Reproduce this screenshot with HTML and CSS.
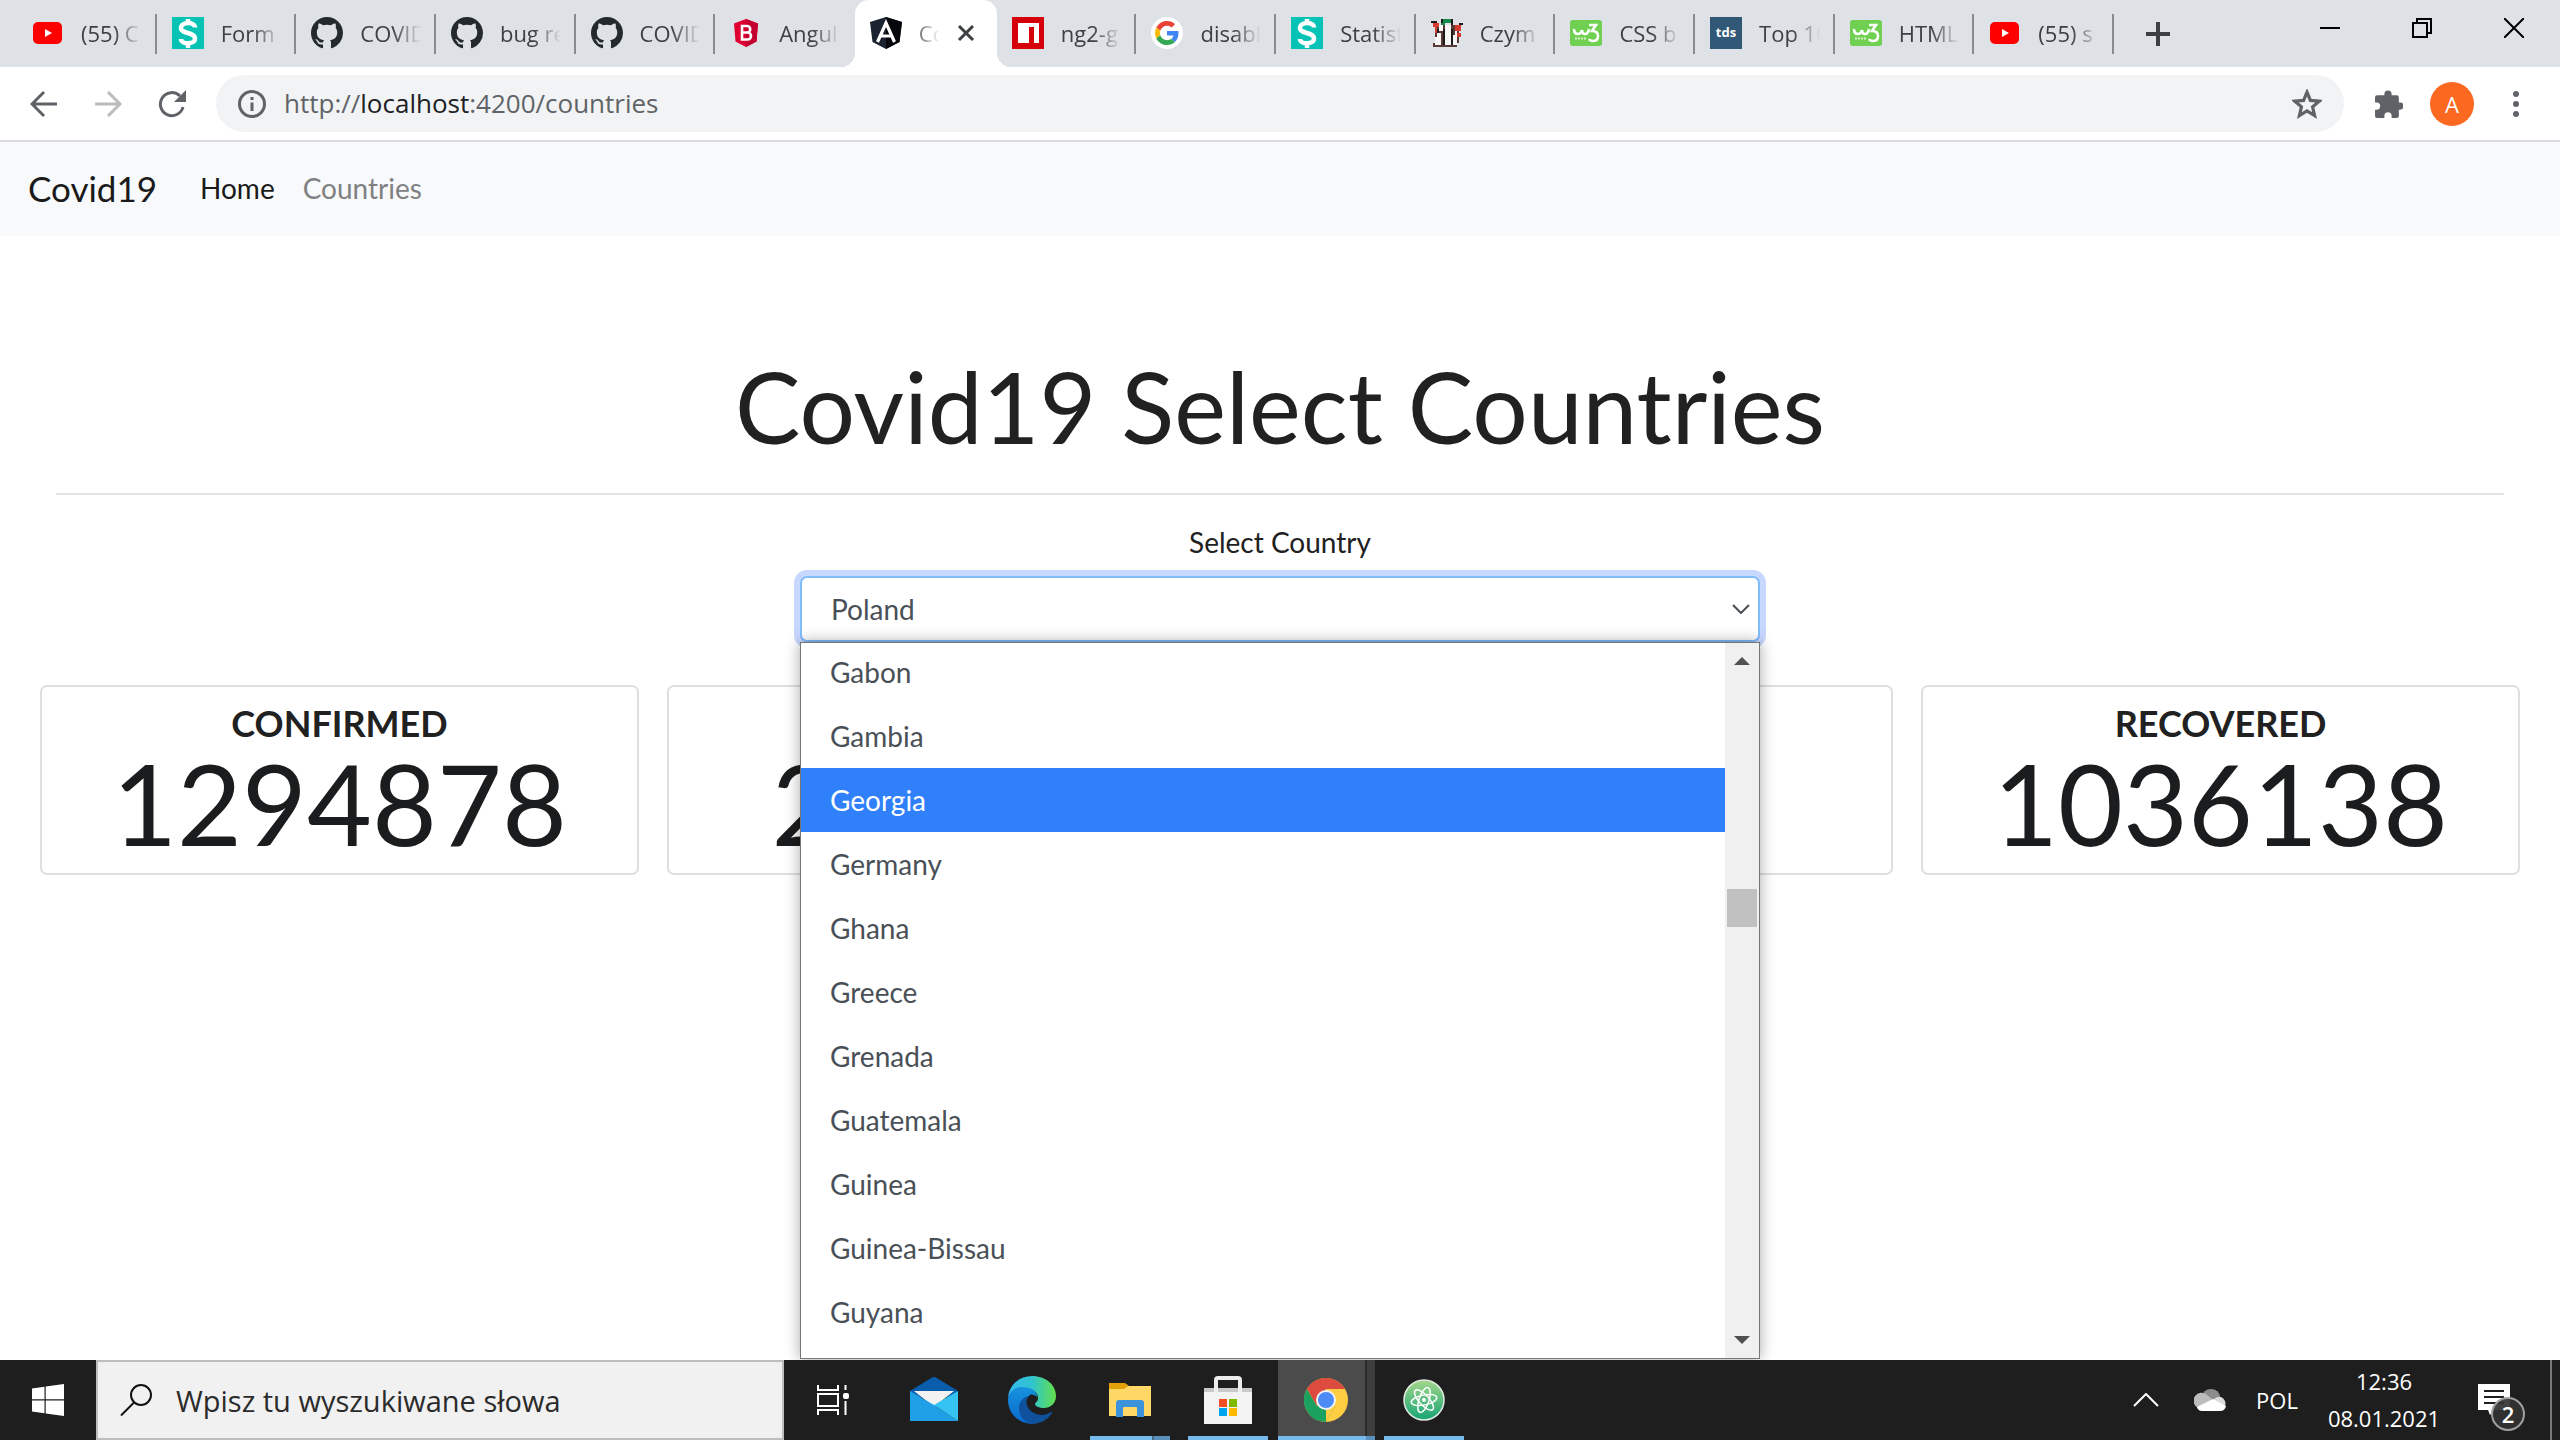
FILE: index.html
```html
<!DOCTYPE html>
<html lang="pl">
<head>
<meta charset="utf-8">
<title>Covid19</title>
<link rel="stylesheet" href="styles.css">
</head>
<body>
<svg class="defs" aria-hidden="true">
  <symbol id="youtube" viewBox="0 0 32 32"><rect x="1" y="5" width="29" height="22" rx="5" fill="#f00"/><path d="M13 12l7 4-7 4z" fill="#fff"/></symbol>
  <symbol id="stack-s" viewBox="0 0 32 32"><path fill="#06c3b5" d="M0 0h32v32H0z"/><path d="M23 10.500C23 4.500 9 4.500 9 11c0 6 14 4 14 10.500 0 6.500-14 6-14 .5M16 2v4M16 26v5" fill="none" stroke="#fff" stroke-width="4.500"/></symbol>
  <symbol id="github" viewBox="0 0 16 16"><path fill="#24292e" d="M8 0C3.580 0 0 3.580 0 8c0 3.540 2.290 6.530 5.470 7.590.4.070.55-.17.55-.38 0-.19-.01-.82-.01-1.490-2.010.37-2.530-.49-2.690-.94-.09-.23-.48-.94-.82-1.130-.28-.15-.68-.52-.01-.53.63-.01 1.080.58 1.230.82.72 1.210 1.870.87 2.330.66.070-.52.28-.87.51-1.070-1.780-.2-3.640-.89-3.640-3.950 0-.87.31-1.590.82-2.150-.08-.2-.36-1.020.08-2.120 0 0 .67-.21 2.200.82.64-.18 1.320-.27 2-.27s1.360.09 2 .27c1.530-1.040 2.200-.82 2.200-.82.44 1.100.16 1.920.08 2.120.51.56.82 1.270.82 2.150 0 3.070-1.870 3.750-3.650 3.950.29.25.54.73.54 1.480 0 1.070-.01 1.930-.01 2.200 0 .21.15.46.55.38A8.010 8.010 0 0 0 16 8c0-4.420-3.580-8-8-8z"/></symbol>
  <symbol id="ng-bootstrap" viewBox="0 0 32 32"><path fill="#dd0031" d="M16 2l12 4.500-1.500 18L16 30 5.500 24.500 4 6.500z"/><path fill="#c3002f" d="M16 2l12 4.500-1.500 18L16 30z"/><path d="M12 9v13.500h5.500a3.500 3.500 0 0 0 0-7H12h5a3.200 3.200 0 0 0 0-6.500z" fill="none" stroke="#fff" stroke-width="2.600"/></symbol>
  <symbol id="angular" viewBox="0 0 32 32"><path fill="#1b2230" d="M16 0l16 5-2.500 20L16 32 2.500 25 0 5z"/><path fill="#05070c" d="M16 0l16 5-2.500 20L16 32z"/><path d="M7.500 25L16 6l8.500 19M11 19h10" fill="none" stroke="#fff" stroke-width="3.200"/></symbol>
  <symbol id="npm" viewBox="0 0 32 32"><path fill="#d6000a" d="M0 0h32v32H0z"/><path fill="#fff" d="M6 6h21v20h-5V10h-5v16H6z"/></symbol>
  <symbol id="google" viewBox="0 0 32 32"><circle cx="16" cy="16" r="16" fill="#fff"/><g transform="translate(4 4) scale(.5)"><path fill="#ea4335" d="M24 9.500c3.540 0 6.710 1.220 9.210 3.600l6.850-6.850C35.900 2.380 30.470 0 24 0 14.620 0 6.510 5.380 2.560 13.220l7.980 6.190C12.430 13.720 17.740 9.500 24 9.500z"/><path fill="#4285f4" d="M46.980 24.550c0-1.570-.15-3.090-.38-4.550H24v9.020h12.940c-.58 2.960-2.260 5.480-4.780 7.180l7.730 6c4.510-4.180 7.090-10.360 7.090-17.650z"/><path fill="#fbbc05" d="M10.530 28.590c-.48-1.450-.76-2.990-.76-4.590s.27-3.140.76-4.590l-7.980-6.190C.92 16.460 0 20.120 0 24c0 3.880.92 7.540 2.560 10.780z"/><path fill="#34a853" d="M24 48c6.480 0 11.930-2.130 15.890-5.810l-7.730-6c-2.150 1.450-4.920 2.300-8.160 2.300-6.260 0-11.570-4.220-13.470-9.910l-7.980 6.190C6.510 42.620 14.620 48 24 48z"/></g></symbol>
  <symbol id="pixels" viewBox="0 0 16 16"><path fill="#5a3a34" d="M2 4h12v9h-1v2H1v-2h1z"/><path fill="#1d1a18" d="M0 2h3v1H0zM5 1h1v3H5zM10 1h1v3h-1zM14 3h2v1h-2zM6 6h1v8H6zM10 6h1v8h-1zM3 6h1v2H3z"/><path fill="#d23a32" d="M1 3h3v2H1zM2 5h1v3H2zM12 4h3v3h-3zM13 8h2v2h-2z"/><path fill="#15884c" d="M6 1h4v2H6zM5 3h2v1H5z"/><path fill="#f7f7f7" d="M4 4h2v3H4zM3 8h2v2H3zM2 10h3v4H2zM7 4h3v10H7zM11 9h2v5h-2zM12 7h1v2h-1z"/></symbol>
  <symbol id="w3" viewBox="0 0 32 32"><rect y="3" width="32" height="26" rx="3" fill="#6fd051"/><path d="M4 12q0 5 4 5 3 0 4-4 0 4 3 4t4-5M19 8h7l-4 6q6 0 6 5t-5 5q-3 0-4-2" fill="none" stroke="#fff" stroke-width="2.600"/><path d="M5 21.500h12" stroke="#d9f4d0" stroke-width="2" stroke-dasharray="2 1"/></symbol>
  <symbol id="tds" viewBox="0 0 32 32"><path fill="#315877" d="M0 0h32v32H0z"/><text x="16" y="20" text-anchor="middle" font-size="13" font-weight="700" fill="#fff">tds</text></symbol>
</svg>

<header class="browser">
  <div class="tabstrip">
    <nav class="tabs" aria-label="Karty">
      <a class="tab" href="#"><svg><use href="#youtube"/></svg><span>(55) C</span></a>
      <a class="tab" href="#"><svg><use href="#stack-s"/></svg><span>Form</span></a>
      <a class="tab" href="#"><svg><use href="#github"/></svg><span>COVID</span></a>
      <a class="tab" href="#"><svg><use href="#github"/></svg><span>bug re</span></a>
      <a class="tab" href="#"><svg><use href="#github"/></svg><span>COVID</span></a>
      <a class="tab tab-last" href="#"><svg><use href="#ng-bootstrap"/></svg><span>Angul</span></a>
      <div class="tab tab-active"><svg><use href="#angular"/></svg><span>Co</span><button class="tab-close" aria-label="Zamknij kartę"><svg viewBox="0 0 18 18"><path d="M2 2l14 14M16 2L2 16"/></svg></button></div>
      <a class="tab" href="#"><svg><use href="#npm"/></svg><span>ng2-g</span></a>
      <a class="tab" href="#"><svg><use href="#google"/></svg><span>disabl</span></a>
      <a class="tab" href="#"><svg><use href="#stack-s"/></svg><span>Statist</span></a>
      <a class="tab" href="#"><svg><use href="#pixels"/></svg><span>Czym</span></a>
      <a class="tab" href="#"><svg><use href="#w3"/></svg><span>CSS b</span></a>
      <a class="tab" href="#"><svg><use href="#tds"/></svg><span>Top 10</span></a>
      <a class="tab" href="#"><svg><use href="#w3"/></svg><span>HTML</span></a>
      <a class="tab" href="#"><svg><use href="#youtube"/></svg><span>(55) s</span></a>
    </nav>
    <button class="new-tab" aria-label="Nowa karta"><svg viewBox="0 0 24 24"><path d="M12 0v24M0 12h24"/></svg></button>
    <div class="window-buttons">
      <button aria-label="Minimalizuj"><svg viewBox="0 0 20 20"><path d="M0 10h20"/></svg></button>
      <button aria-label="Przywróć"><svg viewBox="0 0 20 20"><path d="M1 5h14v14H1zM5 5V1h14v14h-4"/></svg></button>
      <button aria-label="Zamknij"><svg viewBox="0 0 20 20"><path d="M0 0l20 20M20 0L0 20"/></svg></button>
    </div>
  </div>
  <div class="toolbar">
    <button class="tool" aria-label="Wstecz"><svg viewBox="0 0 28 28"><path d="M27 14H3M14 2L2 14l12 12"/></svg></button>
    <button class="tool tool-off" aria-label="Dalej"><svg viewBox="0 0 28 28"><path d="M1 14h24M14 2l12 12-12 12"/></svg></button>
    <button class="tool" aria-label="Odśwież"><svg viewBox="0 0 28 28"><path d="M25 17A11.500 11.500 0 1 1 22 6"/><path class="solid" d="M28 0v12H16z"/></svg></button>
    <div class="address">
      <svg class="info" viewBox="0 0 28 28"><circle cx="14" cy="14" r="12.500"/><path d="M14 12.500V21M14 7v3"/></svg>
      <a class="url" href="#">http://<b>localhost</b>:4200/countries</a>
      <button class="star" aria-label="Dodaj zakładkę"><svg viewBox="0 0 28 28"><path d="M14 3l3.200 7.600 8.300.7-6.300 5.400 1.900 8.100L14 20.500l-7.100 4.300 1.900-8.100-6.300-5.400 8.300-.7z"/></svg></button>
    </div>
    <button class="ext" aria-label="Rozszerzenia"><svg viewBox="0 0 28 28"><path d="M10 5a3.500 3.500 0 0 1 7 0v1h5a2 2 0 0 1 2 2v5h1a3.500 3.500 0 0 1 0 7h-1v6a2 2 0 0 1-2 2h-5v-2a3.500 3.500 0 0 0-7 0v2H3a2 2 0 0 1-2-2v-6h1.500a3.500 3.500 0 0 0 0-7H1V8a2 2 0 0 1 2-2h7z"/></svg></button>
    <button class="avatar">A</button>
    <button class="menu" aria-label="Menu"><i></i><i></i><i></i></button>
  </div>
</header>

<nav class="navbar">
  <a class="brand" href="#">Covid19</a>
  <a class="nav-link nav-current" href="#">Home</a>
  <a class="nav-link" href="#">Countries</a>
</nav>

<main class="page">
  <h1>Covid19 Select Countries</h1>
  <hr>
  <div class="field">
    <label for="country">Select Country</label>
    <div class="select-wrap">
      <select id="country"><option>Poland</option></select>
      <svg class="caret" viewBox="0 0 18 10"><path d="M1 1l8 8 8-8"/></svg>
      <div class="dropdown">
        <ul role="listbox" aria-label="Select Country">
          <li role="option">Gabon</li>
          <li role="option">Gambia</li>
          <li role="option" aria-selected="true" class="highlighted">Georgia</li>
          <li role="option">Germany</li>
          <li role="option">Ghana</li>
          <li role="option">Greece</li>
          <li role="option">Grenada</li>
          <li role="option">Guatemala</li>
          <li role="option">Guinea</li>
          <li role="option">Guinea-Bissau</li>
          <li role="option">Guyana</li>
        </ul>
        <div class="scrollbar">
          <svg viewBox="0 0 16 8"><path d="M8 0l8 8H0z"/></svg>
          <div class="track"><div class="thumb"></div></div>
          <svg viewBox="0 0 16 8"><path d="M0 0h16L8 8z"/></svg>
        </div>
      </div>
    </div>
  </div>
  <section class="cards">
    <article class="card"><h2>CONFIRMED</h2><p>1294878</p></article>
    <article class="card"><h2>ACTIVE</h2><p>228499</p></article>
    <article class="card"><h2>DEATHS</h2><p>30241</p></article>
    <article class="card"><h2>RECOVERED</h2><p>1036138</p></article>
  </section>
</main>

<footer class="taskbar">
  <button class="start" aria-label="Start"><svg viewBox="0 0 32 32"><path d="M0 4.500L12.500 2.800V15.200H0zM13.700 2.600L32 0v15.200H13.700zM0 16.400h12.500v12.800L0 27.500zM13.700 16.400H32V32l-18.300-2.600z"/></svg></button>
  <div class="search">
    <svg viewBox="0 0 32 32"><circle cx="21" cy="11" r="10"/><path d="M14 18.500L1 31.500"/></svg>
    <input type="text" aria-label="Wyszukaj" placeholder="Wpisz tu wyszukiwane słowa">
  </div>
  <button class="task-view" aria-label="Widok zadań"><svg viewBox="0 0 32 32"><path d="M1.500 1v5h20V1M1.500 31v-5h20v5M1.500 10h20v12h-20zM29 1v5M29 17v14" fill="none" stroke="#fff" stroke-width="2"/><rect x="26.500" y="9" width="6" height="6" rx="2" fill="#fff"/></svg></button>
  <div class="apps">
    <button class="app" aria-label="Poczta"><svg viewBox="0 0 48 48"><path d="M0 15L22 1.500q2-1 4 0L48 15v6H0z" fill="#0a5cad"/><path d="M4 15h40L24 31z" fill="#f2f2f2"/><path d="M0 15l24 14 24 16H0z" fill="#1f9fe6"/><path d="M48 15v30L24 29z" fill="#35c3f3"/></svg></button>
    <button class="app" aria-label="Edge"><svg viewBox="0 0 48 48"><defs><linearGradient id="edge-top"><stop stop-color="#35b8f0"/><stop offset=".5" stop-color="#2fc4cf"/><stop offset="1" stop-color="#63e04a"/></linearGradient><linearGradient id="edge-left" x2="0" y2="1"><stop stop-color="#1793dd"/><stop offset="1" stop-color="#0869cf"/></linearGradient></defs><path d="M0 22C1 9 11 0 24 0c14 0 24 9 24 20 0 8-6 12-12 12-5 0-9-2-9-4 0-1.500 3-2 3-6 0-6-6-10-14-10C8 12 2 16 0 22z" fill="url(#edge-top)"/><path d="M0 24c0-7 6-13 14-13 9 0 15 4 15 10-2-2-5-3-7-2-4 2-5 7-4 13 1 7 6 12 12 15C14 51 0 39 0 24z" fill="url(#edge-left)"/><path d="M21 20c-4 4-3 11 2 15 6 5 14 5 20 1 1-1 1.500 0 1 1-5 8-14 12-23 10-7-3-10-9-10-15 0-6 4-11 10-12z" fill="#10519d"/></svg></button>
    <button class="app app-open app-stack" aria-label="Eksplorator plików"><svg viewBox="0 0 48 48"><path d="M3 7h16l4 3v6H3z" fill="#e3a008"/><path d="M3 13h15l4-3h23v30H3z" fill="#ffd766"/><path d="M10 41V27q0-3 3-3h22q3 0 3 3v14h-7v-9q0-1-1-1H18q-1 0-1 1v9z" fill="#3c93dc"/></svg></button>
    <button class="app app-open" aria-label="Microsoft Store"><svg viewBox="0 0 48 48"><path d="M0 12h48v5H0z" fill="#c9c9c9"/><path d="M12 16V4q0-2 2-2h20q2 0 2 2v12" fill="none" stroke="#ededed" stroke-width="4"/><path d="M0 16h48v32H0z" fill="#f3f3f3"/><path d="M15 23h8v8h-8z" fill="#f25022"/><path d="M25 23h8v8h-8z" fill="#7fba00"/><path d="M15 32h8v8h-8z" fill="#00a4ef"/><path d="M25 32h8v8h-8z" fill="#ffb900"/></svg></button>
    <button class="app app-open app-focused" aria-label="Chrome"><svg viewBox="0 0 48 48"><circle cx="24" cy="24" r="22" fill="#ffcd41"/><path d="M4.900 13A22 22 0 0 1 43 13H24L14.500 29.500z" fill="#dc4b3e"/><path d="M4.900 13A22 22 0 0 0 24 46l9.500-16.500H14.500z" fill="#1ba15f"/><path d="M24 46l9.500-16.500L24 24z" fill="#ffcd41"/><circle cx="24" cy="24" r="10" fill="#f4f4f4"/><circle cx="24" cy="24" r="8" fill="#4c8bf5"/></svg></button>
    <button class="app app-open" aria-label="Atom"><svg viewBox="0 0 48 48"><defs><linearGradient id="atom-fill" x2="0" y2="1"><stop stop-color="#a5d78b"/><stop offset="1" stop-color="#16a574"/></linearGradient></defs><circle cx="24" cy="24" r="20" fill="url(#atom-fill)" stroke="#e3e9e4" stroke-width="1.500"/><g fill="none" stroke="#fff" stroke-width="1.500"><ellipse cx="24" cy="24" rx="13" ry="5" transform="rotate(-12 24 24)"/><ellipse cx="24" cy="24" rx="13" ry="5" transform="rotate(48 24 24)"/><ellipse cx="24" cy="24" rx="13" ry="5" transform="rotate(108 24 24)"/></g><circle cx="24" cy="24" r="2" fill="#fff"/></svg></button>
  </div>
  <div class="tray">
    <button class="tray-more" aria-label="Pokaż ukryte ikony"><svg viewBox="0 0 26 14"><path d="M1 13L13 1l12 12"/></svg></button>
    <svg class="cloud" viewBox="0 0 32 22"><path d="M8 8a9 8 0 0 1 18 0l-7 6z" fill="#8c8c8c"/><path d="M4 19a8 8 0 1 1 9-13l6 5z" fill="#bdbdbd"/><path d="M19 11q4-4 8-3a7 7 0 0 1 4 9z" fill="#dcdcdc"/><path d="M3 18l16-8 13 7q-1 5-6 5H8q-4 0-5-4z" fill="#fff"/></svg>
    <span class="lang">POL</span>
    <time class="clock"><span>12:36</span><span>08.01.2021</span></time>
    <button class="notices" aria-label="Powiadomienia"><svg viewBox="0 0 32 32"><path d="M0 0h32v26H16l-4 5-2-5H0z" fill="#fff"/><path d="M6 7h20M6 13h20M6 19h20" stroke="#1e1e1e" stroke-width="2"/></svg><span class="badge">2</span></button>
    <div class="show-desktop"></div>
  </div>
</footer>
</body>
</html>
```
FILE: styles.css
```css
* { box-sizing: border-box; }
body {
  margin: 0;
  min-height: 100vh;
  display: flex;
  flex-direction: column;
  font-family: "Lato", sans-serif;
  font-size: 28px;
  line-height: 42px;
  color: #212529;
  background: #fff;
}
button {
  margin: 0;
  padding: 0;
  border: 0;
  background: none;
  font: inherit;
  color: inherit;
  display: flex;
  align-items: center;
  justify-content: center;
  flex: none;
}
a { color: inherit; text-decoration: none; }
svg { display: block; flex: none; }
.defs { position: absolute; width: 0; height: 0; }
.browser, .taskbar { font-family: "Open Sans", sans-serif; }

/* Tab strip */
.tabstrip { display: flex; height: 67px; background: #dee1e6; padding-left: 17px; }
.tabs { flex: 1; display: flex; min-width: 0; }
.tab {
  position: relative;
  flex: 1 1 0;
  min-width: 0;
  display: flex;
  align-items: center;
  gap: 17px;
  padding: 0 15px 2px;
  font-size: 22px;
  line-height: 32px;
  color: #3c4043;
}
.tab > svg { width: 32px; height: 32px; }
.tab span {
  flex: 1;
  overflow: hidden;
  white-space: nowrap;
  -webkit-mask-image: linear-gradient(to left, transparent, #000 28px);
  mask-image: linear-gradient(to left, transparent, #000 28px);
}
.tab::after {
  content: "";
  position: absolute;
  right: 0;
  top: 14px;
  width: 2px;
  height: 40px;
  background: #888c91;
}
.tab-last::after { display: none; }
.tab-active { flex: 0 0 142px; padding-right: 22px; background: #fff; border-radius: 14px 14px 0 0; }
.tab-active::before, .tab-active::after {
  content: "";
  position: absolute;
  top: auto;
  bottom: 0;
  width: 14px;
  height: 14px;
  background: radial-gradient(circle at 0 0, transparent 14px, #fff 14px);
}
.tab-active::before { left: -14px; }
.tab-active::after { right: -14px; background: radial-gradient(circle at 100% 0, transparent 14px, #fff 14px); }
.tab-close { width: 18px; height: 18px; }
.tab-close svg { width: 18px; stroke: #3c4043; stroke-width: 3; }
.new-tab { width: 88px; }
.new-tab svg { width: 24px; height: 24px; stroke: #3c4043; stroke-width: 4; }
.window-buttons { display: flex; padding-left: 82px; }
.window-buttons button { width: 92px; height: 56px; }
.window-buttons svg { width: 20px; height: 20px; fill: none; stroke: #000; stroke-width: 2; }

/* Toolbar */
.toolbar {
  display: flex;
  align-items: center;
  height: 75px;
  padding: 0 12px;
  background: #fff;
  border-bottom: 2px solid #d9dbdf;
}
.tool { width: 64px; height: 56px; }
.tool svg { width: 28px; height: 28px; fill: none; stroke: #5f6368; stroke-width: 3; }
.tool .solid { fill: #5f6368; stroke: none; }
.tool-off svg { stroke: #babcbe; }
.address {
  flex: 1;
  display: flex;
  align-items: center;
  height: 57px;
  margin: 0 12px;
  padding: 0 22px;
  border-radius: 28px;
  background: #f1f3f4;
}
.info { width: 28px; height: 28px; fill: none; stroke: #5f6368; stroke-width: 3; }
.url { flex: 1; margin-left: 18px; padding-bottom: 2px; font-size: 26px; color: #5f6368; }
.url b { font-weight: 400; color: #202124; }
.star svg { width: 30px; height: 30px; fill: none; stroke: #5f6368; stroke-width: 3; }
.ext { width: 64px; }
.ext svg { width: 29px; height: 29px; fill: #5f6368; }
.avatar { width: 44px; height: 44px; margin: 0 10px; border-radius: 22px; background: #fb6820; color: #fff; font-size: 22px; }
.menu { width: 64px; flex-direction: column; gap: 4px; }
.menu i { width: 6px; height: 6px; border-radius: 3px; background: #5f6368; }

/* Site navigation */
.navbar { display: flex; align-items: center; height: 94px; padding: 0 28px 2px; background: #f8f9fa; }
.brand { margin-right: 29px; font-size: 35px; color: #1a1a1a; }
.nav-link { padding: 0 14px; color: #808182; }
.nav-current { color: #1a1a1a; }

/* Page */
.page { flex: 1; padding: 111px 40px 0; }
h1 { margin: 0 0 28px; font-size: 98px; line-height: 118px; font-weight: 400; text-align: center; color: #212121; }
hr { margin: 0 16px 26px; border: 0; border-top: 2px solid #e3e3e3; }
.field { width: 960px; max-width: 100%; margin: 0 auto; text-align: center; }
label { display: block; margin-bottom: 13px; color: #212121; }
.select-wrap { position: relative; }
select {
  display: block;
  width: 100%;
  height: 66px;
  padding: 0 29px;
  border: 2px solid #80bdff;
  border-radius: 7px;
  background: #fff;
  box-shadow: 0 0 0 6px #c8d7ff;
  outline: 0;
  appearance: none;
  font: inherit;
  color: #495057;
}
.caret { position: absolute; right: 10px; top: 28px; width: 18px; height: 10px; fill: none; stroke: #495057; stroke-width: 2; }
.dropdown {
  position: absolute;
  z-index: 1;
  top: 100%;
  left: 0;
  right: 0;
  height: 717px;
  display: flex;
  overflow: hidden;
  border: 1px solid #767676;
  background: #fff;
  box-shadow: 0 0 14px rgba(0, 0, 0, .35);
}
ul { flex: 1; margin: -3px 0 0; padding: 0; list-style: none; text-align: left; }
li { height: 64px; padding: 0 29px; line-height: 64px; color: #495057; }
.highlighted { background: #2f80fa; color: #fff; }
.scrollbar {
  flex: none;
  width: 34px;
  padding: 14px 2px;
  display: flex;
  flex-direction: column;
  align-items: center;
  background: #f0f0f0;
}
.scrollbar svg { width: 16px; height: 8px; fill: #505050; }
.track { flex: 1; width: 100%; padding-top: 224px; }
.thumb { height: 38px; background: #c1c1c1; }

/* Statistics */
.cards { display: grid; grid-template-columns: repeat(4, 1fr); gap: 28px; margin-top: 43px; }
.card { height: 190px; padding: 14px 0; border: 2px solid #dfdfdf; border-radius: 7px; text-align: center; }
.card h2 { margin: 0; font-size: 36px; line-height: 44px; font-weight: 700; color: #212121; }
.card p { margin: 0; font-size: 112px; line-height: 116px; color: #1b1c1d; }

/* Taskbar */
.taskbar { position: relative; z-index: 2; display: flex; height: 80px; background: #1e1e1e; color: #fff; }
.start { width: 96px; }
.start svg { width: 32px; height: 32px; fill: #fff; }
.search {
  width: 688px;
  display: flex;
  align-items: center;
  gap: 24px;
  padding: 0 22px;
  border: 2px solid #bebebe;
  background: #f1f1f1;
}
.search svg { width: 32px; height: 32px; fill: none; stroke: #111; stroke-width: 2; }
.search input { flex: 1; padding: 2px 0 0; border: 0; outline: 0; background: none; font: inherit; font-size: 29px; color: #2b2b2b; }
.search input::placeholder { color: #2b2b2b; opacity: 1; }
.task-view { width: 96px; }
.task-view svg { width: 33px; height: 32px; }
.apps { display: flex; margin-left: 5px; }
.app { position: relative; width: 98px; }
.app svg { width: 48px; height: 48px; }
.app-open::after {
  content: "";
  position: absolute;
  left: 9px;
  right: 9px;
  bottom: 0;
  height: 4px;
  background: #76b9ed;
}
.app-stack::after { background: linear-gradient(to right, #76b9ed 62px, #476a85 62px, #476a85 64px, #5a91bc 64px); }
.app-focused { background: linear-gradient(to right, transparent 1px, #4b4b4b 1px, #4b4b4b 88px, #2b2b2b 88px, #2b2b2b 90px, #3e3e3e 90px); }
.app-focused::after { left: 1px; right: 0; background: linear-gradient(to right, #76b9ed 88px, #5a91bc 88px); }
.tray { display: flex; align-items: center; margin-left: auto; }
.tray-more { width: 26px; }
.tray-more svg { width: 26px; height: 14px; fill: none; stroke: #fff; stroke-width: 2; }
.cloud { width: 32px; height: 22px; margin-left: 35px; }
.lang { width: 102px; text-align: center; font-size: 22px; }
.clock { width: 112px; display: flex; flex-direction: column; text-align: center; font-size: 22px; line-height: 37px; white-space: nowrap; align-items: center; }
.notices { position: relative; margin-left: 38px; width: 32px; }
.notices svg { width: 32px; height: 32px; }
.badge {
  position: absolute;
  left: 13px;
  top: 13px;
  width: 34px;
  height: 34px;
  border: 2px solid #a0a0a0;
  border-radius: 17px;
  background: rgba(50, 50, 50, .92);
  font-size: 22px;
  line-height: 30px;
  font-weight: 600;
  text-align: center;
}
.show-desktop { width: 10px; height: 80px; margin-left: 40px; border-left: 2px solid #777; }
```
